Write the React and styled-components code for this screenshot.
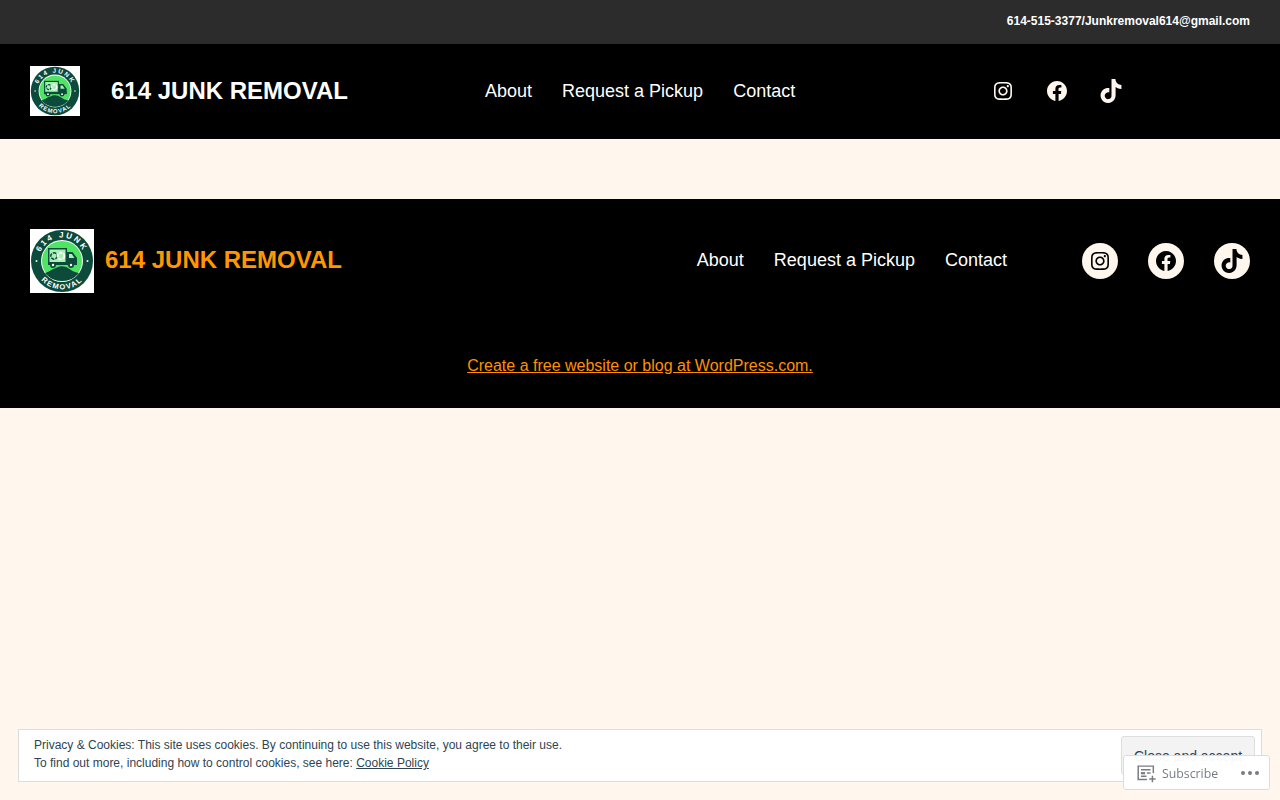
import styled, { createGlobalStyle } from 'styled-components';

const cream = '#fff7ee';
const orange = '#ff9800';

const Global = createGlobalStyle`
  html, body {
    margin: 0;
    padding: 0;
    background: ${cream};
    font-family: "Liberation Sans", Arial, sans-serif;
  }
  a { color: inherit; }
`;

const instagramPath =
  'M12,4.622c2.403,0,2.688,0.009,3.637,0.052c0.877,0.04,1.354,0.187,1.671,0.31c0.42,0.163,0.72,0.358,1.035,0.673c0.315,0.315,0.51,0.615,0.673,1.035c0.123,0.317,0.27,0.794,0.31,1.671c0.043,0.949,0.052,1.234,0.052,3.637s-0.009,2.688-0.052,3.637c-0.04,0.877-0.187,1.354-0.31,1.671c-0.163,0.42-0.358,0.72-0.673,1.035c-0.315,0.315-0.615,0.51-1.035,0.673c-0.317,0.123-0.794,0.27-1.671,0.31c-0.949,0.043-1.233,0.052-3.637,0.052s-2.688-0.009-3.637-0.052c-0.877-0.04-1.354-0.187-1.671-0.31c-0.42-0.163-0.72-0.358-1.035-0.673c-0.315-0.315-0.51-0.615-0.673-1.035c-0.123-0.317-0.27-0.794-0.31-1.671C4.631,14.688,4.622,14.403,4.622,12s0.009-2.688,0.052-3.637c0.04-0.877,0.187-1.354,0.31-1.671c0.163-0.42,0.358-0.72,0.673-1.035c0.315-0.315,0.615-0.51,1.035-0.673c0.317-0.123,0.794-0.27,1.671-0.31C9.312,4.631,9.597,4.622,12,4.622 M12,3C9.556,3,9.249,3.01,8.289,3.054C7.331,3.098,6.677,3.25,6.105,3.472C5.513,3.702,5.011,4.01,4.511,4.511c-0.5,0.5-0.808,1.002-1.038,1.594C3.25,6.677,3.098,7.331,3.054,8.289C3.01,9.249,3,9.556,3,12c0,2.444,0.01,2.751,0.054,3.711c0.044,0.958,0.196,1.612,0.418,2.185c0.23,0.592,0.538,1.094,1.038,1.594c0.5,0.5,1.002,0.808,1.594,1.038c0.572,0.222,1.227,0.375,2.185,0.418C9.249,20.99,9.556,21,12,21s2.751-0.01,3.711-0.054c0.958-0.044,1.612-0.196,2.185-0.418c0.592-0.23,1.094-0.538,1.594-1.038c0.5-0.5,0.808-1.002,1.038-1.594c0.222-0.572,0.375-1.227,0.418-2.185C20.99,14.751,21,14.444,21,12s-0.01-2.751-0.054-3.711c-0.044-0.958-0.196-1.612-0.418-2.185c-0.23-0.592-0.538-1.094-1.038-1.594c-0.5-0.5-1.002-0.808-1.594-1.038c-0.572-0.222-1.227-0.375-2.185-0.418C14.751,3.01,14.444,3,12,3L12,3z M12,7.378c-2.552,0-4.622,2.069-4.622,4.622S9.448,16.622,12,16.622s4.622-2.069,4.622-4.622S14.552,7.378,12,7.378z M12,15c-1.657,0-3-1.343-3-3s1.343-3,3-3s3,1.343,3,3S13.657,15,12,15z M16.804,6.116c-0.596,0-1.08,0.484-1.08,1.08s0.484,1.08,1.08,1.08c0.596,0,1.08-0.484,1.08-1.08S17.401,6.116,16.804,6.116z';
const facebookPath =
  'M12 2C6.5 2 2 6.5 2 12c0 5 3.7 9.1 8.4 9.9v-7H7.9V12h2.5V9.8c0-2.5 1.5-3.9 3.8-3.9 1.1 0 2.2.2 2.2.2v2.5h-1.3c-1.2 0-1.6.8-1.6 1.6V12h2.8l-.4 2.9h-2.3v7C18.3 21.1 22 17 22 12c0-5.5-4.5-10-10-10z';
const tiktokPath =
  'M16.708 0.027c1.745-0.027 3.48-0.011 5.213-0.027 0.105 2.041 0.839 4.12 2.333 5.563 1.491 1.479 3.6 2.156 5.652 2.385v5.369c-1.923-0.063-3.855-0.463-5.6-1.291-0.76-0.344-1.468-0.787-2.161-1.24-0.009 3.896 0.016 7.787-0.025 11.667-0.104 1.864-0.719 3.719-1.803 5.255-1.744 2.557-4.771 4.224-7.88 4.276-1.907 0.109-3.812-0.411-5.437-1.369-2.693-1.588-4.588-4.495-4.864-7.615-0.032-0.667-0.043-1.333-0.019-1.984 0.24-2.537 1.495-4.964 3.443-6.615 2.208-1.923 5.301-2.839 8.197-2.297 0.027 1.975-0.052 3.948-0.052 5.923-1.323-0.428-2.869-0.308-4.025 0.495-0.844 0.547-1.485 1.385-1.819 2.333-0.276 0.676-0.197 1.427-0.181 2.145 0.317 2.188 2.421 4.027 4.667 3.828 1.489-0.016 2.916-0.88 3.692-2.145 0.251-0.443 0.532-0.896 0.547-1.417 0.131-2.385 0.079-4.76 0.095-7.145 0.011-5.375-0.016-10.735 0.025-16.093z';

const socials = [
  { name: 'Instagram', d: instagramPath, box: '0 0 24 24' },
  { name: 'Facebook', d: facebookPath, box: '0 0 24 24' },
  { name: 'TikTok', d: tiktokPath, box: '0 0 32 32' },
];

const TopBar = styled.div`
  height: 44px;
  box-sizing: border-box;
  background: #2c2c2c;
  color: #fff;
  display: flex;
  align-items: center;
  justify-content: flex-end;
  padding: 0 30px 2px;
  font-size: 12px;
  font-weight: 700;
`;

const Header = styled.header`
  height: 95px;
  box-sizing: border-box;
  background: #000;
  padding: 0 30px 1px;
  display: grid;
  grid-template-columns: 455px 506px 1fr;
  align-items: center;
`;

const Brand = styled.div`
  display: flex;
  align-items: center;
  gap: ${(p) => p.$gap}px;
`;

const Title = styled.a`
  font-size: 24px;
  font-weight: 700;
  line-height: 29px;
  text-decoration: none;
  padding-bottom: ${(p) => p.$lift}px;
  color: ${(p) => p.$color};
`;

const Nav = styled.nav`
  display: flex;
  gap: 30px;
  font-size: 18px;
  line-height: 21px;
  color: #fff;
  padding-bottom: ${(p) => (p.$lift ? 2 : 0)}px;
`;

const NavLink = styled.a`
  text-decoration: none;
  color: #fff;
`;

const SocialRow = styled.div`
  display: flex;
  gap: 30px;
`;

const SocialLink = styled.a`
  display: flex;
  align-items: center;
  justify-content: center;
  width: ${(p) => (p.$filled ? 36 : 24)}px;
  height: ${(p) => (p.$filled ? 36 : 24)}px;
  border-radius: 50%;
  background: ${(p) => (p.$filled ? cream : 'transparent')};
  color: ${(p) => (p.$filled ? '#000' : cream)};
`;

const Spacer = styled.div`
  height: 60px;
`;

const Footer = styled.footer`
  height: 209px;
  background: #000;
  padding: 30px 30px 0;
  box-sizing: border-box;
`;

const FooterTop = styled.div`
  display: flex;
  align-items: center;
  justify-content: space-between;
`;

const FooterRight = styled.div`
  display: flex;
  align-items: center;
  gap: 75px;
`;

const Credit = styled.p`
  margin: 64px 0 0;
  text-align: center;
  font-size: 16px;
  line-height: 18px;
  color: #ff9100;
`;

const CookieBar = styled.div`
  position: fixed;
  left: 18px;
  right: 18px;
  bottom: 18px;
  height: 53px;
  box-sizing: border-box;
  background: #fff;
  border: 1px solid #dedede;
  display: flex;
  justify-content: space-between;
  padding: 6px 6px 0 15px;
  overflow: hidden;
  font-size: 12px;
  line-height: 18px;
  color: #2e4453;
`;

const CookieLink = styled.a`
  color: #2e4453;
  text-decoration: underline;
`;

const CloseButton = styled.button`
  width: 134px;
  height: 39px;
  background: #f3f3f3;
  border: 1px solid #dedede;
  border-radius: 3px;
  color: #2e4453;
  font: 14px "Liberation Sans", Arial, sans-serif;
  padding: 0;
`;

const SubscribeBar = styled.div`
  position: fixed;
  right: 10px;
  bottom: 10px;
  width: 147px;
  height: 35px;
  box-sizing: border-box;
  display: flex;
  align-items: center;
  padding: 0 10px 0 11px;
  background: rgba(255, 255, 255, 0.96);
  border: 1px solid #dcdcde;
  border-radius: 3px;
  color: #787c82;
  font-family: "Open Sans", "Noto Sans", sans-serif;
  font-size: 12.300px;
`;

const SubscribeLabel = styled.span`
  margin-left: 5px;
  padding-top: 1px;
  flex: 1;
`;

const Dots = styled.span`
  display: flex;
  gap: 3px;
`;

const Dot = styled.i`
  width: 4px;
  height: 4px;
  border-radius: 50%;
  background: #787c82;
`;

const ringGreen = '#0c4a3b';
const innerGreen = '#4fe463';

const Logo = ({ size }) => (
  <svg width={size} height={size} viewBox="0 0 64 64" aria-label="614 Junk Removal logo">
    <rect width="64" height="64" fill="#fff" />
    <circle cx="32" cy="32" r="31" fill={ringGreen} />
    <circle cx="32" cy="32" r="21" fill="#fff" />
    <circle cx="32" cy="32" r="20" fill={innerGreen} />
    <path d="M15 44c4-1 7-4 11-5 3-2 7-2 10-1 3 1 6 5 13 6-4 5-10 8-17 8s-13-3-17-8z" fill={ringGreen} />
    <rect x="18" y="19" width="19" height="16" fill={ringGreen} />
    <rect x="19.500" y="20.500" width="16" height="13" fill="#a8f0b4" />
    <path d="M37 23h5.500l4.500 6v6H37z" fill={ringGreen} />
    <path d="M39 25h2.800l2.600 4H39z" fill="#a8f0b4" />
    <rect x="18" y="33" width="29" height="3" fill={ringGreen} />
    <circle cx="23" cy="36" r="3" fill={ringGreen} />
    <circle cx="41" cy="36" r="3" fill={ringGreen} />
    <circle cx="23" cy="36" r="1.200" fill="#fff" />
    <circle cx="41" cy="36" r="1.200" fill="#fff" />
    <circle cx="24" cy="27" r="3.200" fill="none" stroke={ringGreen} strokeWidth="1.500" strokeDasharray="3.500 1" />
    <circle cx="31" cy="27" r="3.400" fill="none" stroke="#fff" strokeWidth="1.800" strokeDasharray="3.500 1" />
    <circle cx="6.500" cy="32" r="1" fill="#dff" />
    <circle cx="57.500" cy="32" r="1" fill="#dff" />
    <defs>
      <path id={`top${size}`} d="M11.500 42A23 23 0 1 1 52.500 42" />
      <path id={`bot${size}`} d="M5.500 42A28.300 28.300 0 0 0 58.500 42" />
    </defs>
    <text fontFamily='"Liberation Sans", sans-serif' fontSize="8" fontWeight="700" fill="#fff" letterSpacing="2.200">
      <textPath href={`#top${size}`} startOffset="50%" textAnchor="middle">614 JUNK</textPath>
    </text>
    <text fontFamily='"Liberation Sans", sans-serif' fontSize="7.500" fontWeight="700" fill="#fff" letterSpacing="1.400">
      <textPath href={`#bot${size}`} startOffset="50%" textAnchor="middle">REMOVAL</textPath>
    </text>
  </svg>
);

const SocialIcons = ({ filled }) => (
  <SocialRow>
    {socials.map((s) => (
      <SocialLink key={s.name} href="#" aria-label={s.name} $filled={filled}>
        <svg width="24" height="24" viewBox={s.box} fill="currentColor">
          <path d={s.d} />
        </svg>
      </SocialLink>
    ))}
  </SocialRow>
);

const Links = ({ lift }) => (
  <Nav $lift={lift}>
    <NavLink href="#">About</NavLink>
    <NavLink href="#">Request a Pickup</NavLink>
    <NavLink href="#">Contact</NavLink>
  </Nav>
);

const SubscribeIcon = () => (
  <svg width="22" height="22" viewBox="0 0 24 24" fill="none" stroke="#787c82" strokeWidth="1.600">
    <path d="M20 12V4.500H3.500V19H13" />
    <path d="M6.500 8.500h10.500M6.500 15.500h6" />
    <rect x="6.500" y="11" width="4.500" height="2.400" fill="#787c82" stroke="none" />
    <path d="M13 12h4" />
    <path d="M19 15v7M15.500 18.500h7" />
  </svg>
);

export default function App() {
  return (
    <>
      <Global />
      <TopBar>614-515-3377/Junkremoval614@gmail.com</TopBar>
      <Header>
        <Brand $gap={31}>
          <Logo size={50} />
          <Title href="#" $color="#fff" $lift={2}>614 JUNK REMOVAL</Title>
        </Brand>
        <Links />
        <SocialIcons />
      </Header>
      <Spacer />
      <Footer>
        <FooterTop>
          <Brand $gap={11}>
            <Logo size={64} />
            <Title href="#" $color={orange} $lift={3}>614 JUNK REMOVAL</Title>
          </Brand>
          <FooterRight>
            <Links lift />
            <SocialIcons filled />
          </FooterRight>
        </FooterTop>
        <Credit>
          <a href="#">Create a free website or blog at WordPress.com.</a>
        </Credit>
      </Footer>
      <CookieBar>
        <div>
          Privacy &amp; Cookies: This site uses cookies. By continuing to use this website, you agree to their use.
          <br />
          To find out more, including how to control cookies, see here: <CookieLink href="#">Cookie Policy</CookieLink>
        </div>
        <CloseButton>Close and accept</CloseButton>
      </CookieBar>
      <SubscribeBar>
        <SubscribeIcon />
        <SubscribeLabel>Subscribe</SubscribeLabel>
        <Dots>
          <Dot />
          <Dot />
          <Dot />
        </Dots>
      </SubscribeBar>
    </>
  );
}
